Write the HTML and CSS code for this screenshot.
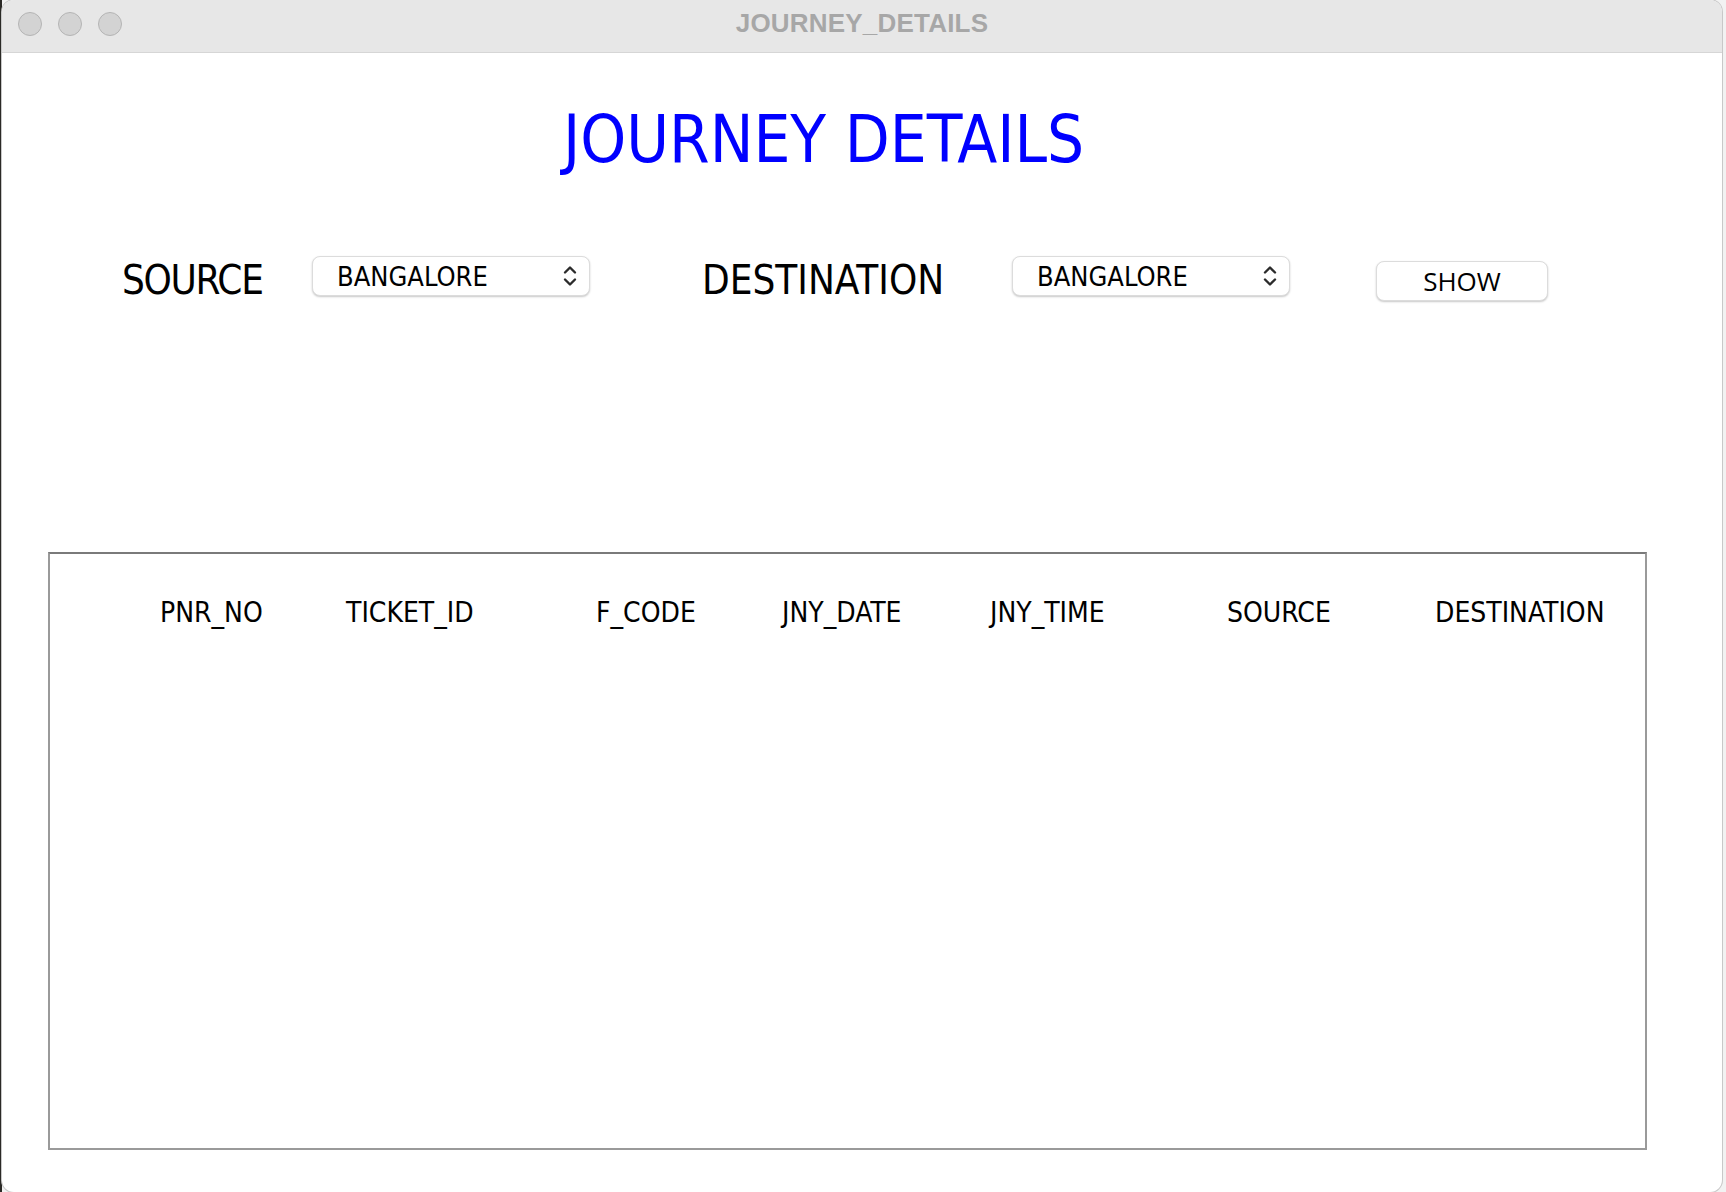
FILE: index.html
```html
<!DOCTYPE html>
<html>
<head>
<meta charset="utf-8">
<title>JOURNEY_DETAILS</title>
<link rel="stylesheet" href="styles.css">
</head>
<body>
<div class="window">
  <div class="titlebar">
    <div class="lights">
      <span class="light"></span>
      <span class="light"></span>
      <span class="light"></span>
    </div>
    <div class="wtitle">JOURNEY_DETAILS</div>
  </div>
  <div class="content">
    <h1 class="heading">JOURNEY DETAILS</h1>
    <div class="controls">
      <div class="label lbl-source">SOURCE</div>
      <div class="select sel-source">
        <span class="sel-text">BANGALORE</span>
        <svg class="chev" width="14" height="22" viewBox="0 0 14 22"><path d="M2 7.5 L7 2.5 L12 7.5" fill="none" stroke="#2b2b2b" stroke-width="2.4" stroke-linecap="round" stroke-linejoin="round"/><path d="M2 14.5 L7 19.5 L12 14.5" fill="none" stroke="#2b2b2b" stroke-width="2.4" stroke-linecap="round" stroke-linejoin="round"/></svg>
      </div>
      <div class="label lbl-dest">DESTINATION</div>
      <div class="select sel-dest">
        <span class="sel-text">BANGALORE</span>
        <svg class="chev" width="14" height="22" viewBox="0 0 14 22"><path d="M2 7.5 L7 2.5 L12 7.5" fill="none" stroke="#2b2b2b" stroke-width="2.4" stroke-linecap="round" stroke-linejoin="round"/><path d="M2 14.5 L7 19.5 L12 14.5" fill="none" stroke="#2b2b2b" stroke-width="2.4" stroke-linecap="round" stroke-linejoin="round"/></svg>
      </div>
      <button class="btn">SHOW</button>
    </div>
    <div class="table">
      <div class="thead">
        <span class="th">PNR_NO</span>
        <span class="th">TICKET_ID</span>
        <span class="th">F_CODE</span>
        <span class="th">JNY_DATE</span>
        <span class="th">JNY_TIME</span>
        <span class="th">SOURCE</span>
        <span class="th">DESTINATION</span>
      </div>
    </div>
  </div>
</div>
</body>
</html>
```
FILE: styles.css
```css
html, body {
  margin: 0;
  padding: 0;
  height: 1192px;
  overflow: hidden;
}
body {
  background: linear-gradient(to right, #2b2a26 0, #2b2a26 2px, #f2f2f2 2px);
  font-family: "DejaVu Sans Condensed", "DejaVu Sans", sans-serif;
}
.window {
  margin-left: 2px;
  width: 1720px;
  height: 1192px;
  background: #ffffff;
  border-radius: 12px;
  overflow: hidden;
  box-shadow: 0 0 0 1px #c8c8c8;
  display: flex;
  flex-direction: column;
}
.titlebar {
  height: 52px;
  background: #e7e7e7;
  border-bottom: 1px solid #d6d6d6;
  position: relative;
  display: flex;
  align-items: center;
  justify-content: center;
  flex-shrink: 0;
}
.lights {
  position: absolute;
  left: 16px;
  top: 12px;
  display: flex;
  gap: 16px;
}
.light {
  width: 22px;
  height: 22px;
  border-radius: 50%;
  background: #d3d3d3;
  border: 1px solid #b4b4b4;
}
.wtitle {
  font-family: "Liberation Sans", Arial, sans-serif;
  font-weight: bold;
  font-size: 26px;
  color: #a7a7a7;
  letter-spacing: 0.2px;
  margin-top: -5px;
}
.content {
  flex: 1;
  display: flex;
  flex-direction: column;
}
.heading {
  margin: 54px 0 0 561px;
  font-weight: normal;
  font-size: 65px;
  line-height: 65px;
  color: #0000ff;
}
.controls {
  margin-top: 84px;
  height: 40px;
  display: flex;
  align-items: flex-start;
}
.label {
  font-size: 40px;
  line-height: 40px;
  color: #000;
  margin-top: 4px;
}
.lbl-source {
  margin-left: 120px;
  width: 190px;
  letter-spacing: -1.3px;
}
.lbl-dest {
  margin-left: 112px;
  width: 310px;
}
.select {
  width: 278px;
  height: 40px;
  box-sizing: border-box;
  border-radius: 8px;
  background: #fff;
  border: 1px solid #dcdcdc;
  box-shadow: 0 1px 2px rgba(0, 0, 0, 0.22);
  display: flex;
  align-items: center;
  justify-content: space-between;
  padding: 0 12px 0 24px;
}
.sel-text {
  font-size: 27px;
  color: #000;
  margin-top: 1px;
}
.chev {
  display: block;
}
.btn {
  margin: 5px 0 0 86px;
  width: 172px;
  height: 40px;
  box-sizing: border-box;
  border-radius: 8px;
  background: #fff;
  border: 1px solid #dcdcdc;
  box-shadow: 0 1px 2px rgba(0, 0, 0, 0.22);
  font-family: "Open Sans", "DejaVu Sans", sans-serif;
  font-size: 26px;
  color: #000;
  padding: 0;
  line-height: 38px;
}
.table {
  margin: 256px 0 0 46px;
  width: 1599px;
  height: 598px;
  box-sizing: border-box;
  border: 2px solid #9a9a9a;
  border-top-color: #7a7a7a;
}
.thead {
  margin-top: 42px;
  padding-left: 110px;
  display: grid;
  grid-template-columns: 186px 250px 186px 208px 237px 208px auto;
  font-size: 28px;
  line-height: 34px;
  color: #000;
}
```
